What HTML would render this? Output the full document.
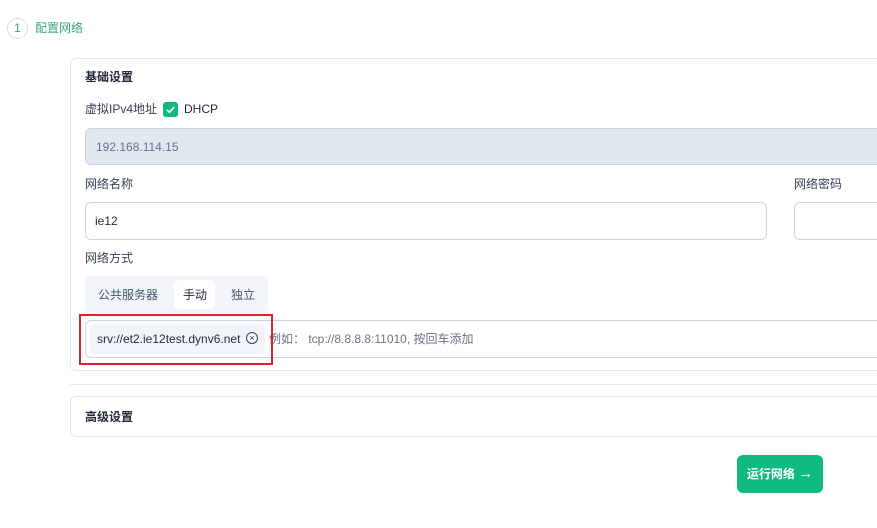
<!DOCTYPE html><html><head><meta charset="utf-8"><style>
body{margin:0;width:877px;height:528px;background:#fff;font-family:"Liberation Sans","Noto Sans CJK SC",sans-serif;font-size:12px;color:#334155;position:relative;overflow:hidden}
.a{position:absolute;line-height:14px}
.inp{position:absolute;border:1px solid #d1d5db;border-radius:6px;box-sizing:border-box;background:#fff}
</style></head><body>
<div class="a" style="left:7px;top:18px;width:19px;height:19px;border:1.5px solid #d8dde3;border-radius:50%;text-align:center;line-height:19px;color:#3aa776;font-size:12px">1</div>
<div class="a" style="left:35px;top:21px;color:#3aa776">配置网络</div>
<div class="a" style="left:70px;top:58px;width:830px;height:313px;border:1px solid #e5e7eb;border-radius:6px;box-sizing:border-box"></div>
<div class="a" style="left:85px;top:70px;font-weight:bold;color:#1f2937">基础设置</div>
<div class="a" style="left:85px;top:102px;color:#374151">虚拟IPv4地址</div>
<div class="a" style="left:163px;top:102px;width:15px;height:15px;background:#10b981;border-radius:3px"><svg width="15" height="15"><path d="M4 7.8l2.5 2.4 4.6-5" stroke="#fff" stroke-width="1.6" fill="none"/></svg></div>
<div class="a" style="left:184px;top:102px;color:#1f2937">DHCP</div>
<div class="inp" style="left:85px;top:128px;width:820px;height:37px;background:#e2e8f0;border-color:#cbd5e1"><span class="a" style="left:10px;top:11px;color:#64748b">192.168.114.15</span></div>
<div class="a" style="left:85px;top:177px">网络名称</div>
<div class="a" style="left:794px;top:177px">网络密码</div>
<div class="inp" style="left:85px;top:202px;width:682px;height:38px"><span class="a" style="left:9px;top:11px;color:#1f2937">ie12</span></div>
<div class="inp" style="left:794px;top:202px;width:120px;height:38px"></div>
<div class="a" style="left:85px;top:251px">网络方式</div>
<div class="a" style="left:85px;top:276px;width:183px;height:37px;background:#f1f5f9;border-radius:6px"></div>
<div class="a" style="left:174px;top:280px;width:41px;height:29px;background:#fff;border-radius:5px"></div>
<div class="a" style="left:98px;top:288px;color:#475569">公共服务器</div>
<div class="a" style="left:183px;top:288px;color:#1f2937">手动</div>
<div class="a" style="left:231px;top:288px;color:#475569">独立</div>
<div class="inp" style="left:85px;top:320px;width:820px;height:38px"></div>
<div class="a" style="left:90px;top:324px;width:175px;height:30px;background:#f1f5f9;border-radius:5px"></div>
<div class="a" style="left:97px;top:332px;color:#1f2937">srv://et2.ie12test.dynv6.net</div>
<div class="a" style="left:246px;top:332px;width:10px;height:10px;border:1px solid #334155;border-radius:50%;font-size:9px;line-height:10px;text-align:center">×</div>
<div class="a" style="left:269px;top:332px;color:#6b7280">例如： tcp://8.8.8.8:11010, 按回车添加</div>
<div class="a" style="left:79px;top:314px;width:194px;height:51px;border:2px solid #d9232d;box-sizing:border-box"></div>
<div class="a" style="left:70px;top:384px;width:820px;height:1px;background:#e5e7eb"></div>
<div class="a" style="left:70px;top:396px;width:830px;height:41px;border:1px solid #e5e7eb;border-radius:6px;box-sizing:border-box"></div>
<div class="a" style="left:85px;top:410px;font-weight:bold;color:#1f2937">高级设置</div>
<div class="a" style="left:737px;top:455px;width:86px;height:38px;background:#10b981;border-radius:6px;color:#fff;font-weight:bold;line-height:38px;text-align:center;font-size:12px">运行网络 <span style="font-size:15px;font-weight:bold">→</span></div>
</body></html>
